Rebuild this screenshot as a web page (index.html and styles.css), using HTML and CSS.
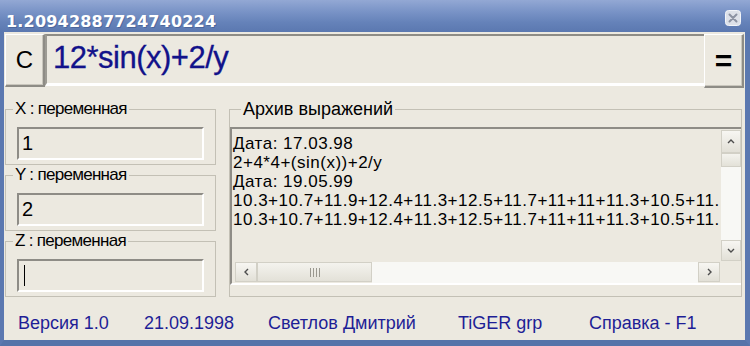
FILE: index.html
```html
<!DOCTYPE html>
<html lang="ru">
<head>
    <meta charset="UTF-8">
    <title>1.20942887724740224</title>
    <link rel="stylesheet" href="styles.css">
</head>
<body>
    <div class="window">
        <div class="titlebar">
            <span class="title">1.20942887724740224</span>
            <span class="close">
                <svg width="16" height="16" viewBox="0 0 16 16">
                    <rect x="0.5" y="0.5" width="15" height="15" rx="3" fill="#dde1e9" stroke="#f3f5f9"/>
                    <path d="M4.5 4.5 L11.5 11.5 M11.5 4.5 L4.5 11.5" stroke="#8c93a3" stroke-width="2" stroke-linecap="round"/>
                </svg>
            </span>
        </div>
        <div class="frame">
            <div class="client">
                <div class="expr-row">
                    <button class="btn btn-clear">C</button>
                    <div class="expr">12*sin(x)+2/y</div>
                    <button class="btn btn-eq">=</button>
                </div>

                <div class="main">
                    <div class="vars">
                        <fieldset class="group var">
                            <legend>X : переменная</legend>
                            <div class="field">1</div>
                        </fieldset>
                        <fieldset class="group var">
                            <legend>Y : переменная</legend>
                            <div class="field">2</div>
                        </fieldset>
                        <fieldset class="group var">
                            <legend>Z : переменная</legend>
                            <div class="field"><span class="caret"></span></div>
                        </fieldset>
                    </div>

                    <fieldset class="group archive">
                        <legend>Архив выражений</legend>
                        <div class="list">
                            <div class="lines">
                                <div>Дата: 17.03.98</div>
                                <div>2+4*4+(sin(x))+2/y</div>
                                <div>Дата: 19.05.99</div>
                                <div>10.3+10.7+11.9+12.4+11.3+12.5+11.7+11+11+11.3+10.5+11.</div>
                                <div>10.3+10.7+11.9+12.4+11.3+12.5+11.7+11+11+11.3+10.5+11.</div>
                            </div>
                            <div class="vscroll">
                                <div class="sb-btn sb-up">
                                    <svg width="8" height="5" viewBox="0 0 8 5"><path d="M1 4 L4 1 L7 4" fill="none" stroke="#4d4d4d" stroke-width="1.4"/></svg>
                                </div>
                                <div class="sb-thumb sb-thumb-v"></div>
                                <div class="sb-track"></div>
                                <div class="sb-btn sb-down">
                                    <svg width="8" height="5" viewBox="0 0 8 5"><path d="M1 1 L4 4 L7 1" fill="none" stroke="#4d4d4d" stroke-width="1.4"/></svg>
                                </div>
                            </div>
                            <div class="hscroll">
                                <div class="sb-btn sb-left">
                                    <svg width="5" height="8" viewBox="0 0 5 8"><path d="M4 1 L1 4 L4 7" fill="none" stroke="#4d4d4d" stroke-width="1.4"/></svg>
                                </div>
                                <div class="sb-thumb sb-thumb-h">
                                    <span class="grip"></span><span class="grip"></span><span class="grip"></span><span class="grip"></span>
                                </div>
                                <div class="sb-track"></div>
                                <div class="sb-btn sb-right">
                                    <svg width="5" height="8" viewBox="0 0 5 8"><path d="M1 1 L4 4 L1 7" fill="none" stroke="#4d4d4d" stroke-width="1.4"/></svg>
                                </div>
                            </div>
                            <div class="sb-corner"></div>
                        </div>
                    </fieldset>
                </div>

                <div class="status">
                    <span>Версия 1.0</span>
                    <span>21.09.1998</span>
                    <span>Светлов Дмитрий</span>
                    <span>TiGER grp</span>
                    <span>Справка - F1</span>
                </div>
            </div>
        </div>
    </div>
</body>
</html>
```

FILE: styles.css
```css
body {
    margin: 0;
    font-family: "Liberation Sans", Arial, sans-serif;
    background: #ece9e0;
}
.window {
    width: 750px;
    height: 346px;
    display: flex;
    flex-direction: column;
    overflow: hidden;
}
.titlebar {
    height: 32px;
    flex: none;
    display: flex;
    justify-content: space-between;
    align-items: flex-start;
    padding: 0 9px 0 6px;
    box-sizing: border-box;
    background: linear-gradient(#93a8d4 0, #7a94c7 35%, #6582b9 70%, #5b78b0 100%);
}
.title {
    margin-top: 12px;
    font-family: "DejaVu Sans", sans-serif;
    font-weight: bold;
    font-size: 16px;
    line-height: 19px;
    letter-spacing: 0.2px;
    color: #fff;
    text-shadow: 1px 1px 0 rgba(40,60,110,0.35);
}
.close {
    margin-top: 10px;
    width: 16px;
    height: 16px;
}
.close svg {
    display: block;
}
.frame {
    flex: 1;
    display: flex;
    border-left: 4px solid #5b78b0;
    border-right: 5px solid #5b78b0;
    border-bottom: 6px solid #5573a9;
}
.client {
    flex: 1;
    display: flex;
    flex-direction: column;
    padding: 2px 1px 0 1px;
    background: #ece9e0;
}

/* expression row */
.expr-row {
    display: flex;
    align-items: flex-start;
}
.btn {
    flex: none;
    width: 40px;
    padding: 0;
    margin: 0;
    background: #ece9e0;
    font-family: "Liberation Sans", Arial, sans-serif;
    color: #000;
    border-top: 1px solid #fff;
    border-left: 1px solid #fff;
    border-right: 2px solid #8e8c86;
    border-bottom: 2px solid #8e8c86;
    box-shadow: inset -1px -1px 0 #c9c6bd;
}
.btn-clear {
    height: 53px;
    font-size: 24px;
}
.btn-eq {
    height: 54px;
    font-size: 30px;
    font-weight: bold;
}
.expr {
    flex: 1;
    height: 52px;
    box-sizing: border-box;
    display: flex;
    align-items: center;
    padding: 0 0 3px 6px;
    border-top: 2px solid #8e8c86;
    border-left: 2px solid #9d9b94;
    border-bottom: 3px solid #fff;
    font-size: 31px;
    letter-spacing: -0.5px;
    color: #12128a;
    -webkit-text-stroke: 0.3px #12128a;
}

/* groups */
.main {
    margin-top: 12px;
    display: grid;
    grid-template-columns: 211px 513px;
    column-gap: 13px;
}
.group {
    margin: 0;
    border: 1px solid #c3c0b5;
    min-width: 0;
}
.group legend {
    font-size: 18px;
    line-height: 18px;
    padding: 0 2px;
    color: #000;
}
.vars {
    display: flex;
    flex-direction: column;
    gap: 1px;
}
.var {
    padding: 0 7px 4px 7px;
}
.var legend {
    font-size: 17px;
    letter-spacing: -0.7px;
}
.field {
    margin: 9px 4px 0 4px;
    height: 33px;
    box-sizing: border-box;
    display: flex;
    align-items: center;
    padding-left: 3px;
    border-top: 2px solid #8e8c86;
    border-left: 2px solid #8e8c86;
    border-right: 2px solid #fff;
    border-bottom: 2px solid #fff;
    font-size: 20px;
    color: #000;
}
.caret {
    width: 0;
    height: 21px;
    border-left: 1px solid #000;
    margin-left: 2px;
}

/* archive list */
.archive {
    padding: 0 0 11px 0;
}
.archive legend {
    margin-left: 11px;
}
.list {
    margin-top: 9px;
    height: 158px;
    box-sizing: border-box;
    display: grid;
    grid-template-columns: 1fr 20px;
    grid-template-rows: 132px 22px;
    border-top: 2px solid #8e8c86;
    border-left: 2px solid #8e8c86;
    border-bottom: 2px solid #fff;
}
.lines {
    overflow: hidden;
    white-space: nowrap;
    padding: 5px 0 0 1px;
    font-size: 17px;
    line-height: 19px;
    letter-spacing: 0.5px;
    color: #000;
}
.vscroll {
    display: flex;
    flex-direction: column;
    padding-top: 1px;
}
.hscroll {
    display: flex;
    padding: 1px 0 0 3px;
}
.sb-btn {
    flex: none;
    display: flex;
    align-items: center;
    justify-content: center;
    box-sizing: border-box;
    border: 1px solid #d2d0c6;
    background: linear-gradient(#f7f6f2, #e2e0d7);
}
.sb-btn svg {
    display: block;
}
.sb-up {
    height: 23px;
}
.sb-down {
    height: 21px;
}
.sb-left,
.sb-right {
    width: 22px;
    height: 20px;
}
.sb-right {
    margin-right: 1px;
}
.sb-thumb {
    flex: none;
    box-sizing: border-box;
    border: 1px solid #d2d0c6;
    background: linear-gradient(#f4f3ee, #e3e1d8);
}
.sb-thumb-v {
    height: 14px;
}
.sb-thumb-h {
    width: 115px;
    height: 20px;
    display: flex;
    align-items: center;
    justify-content: center;
    gap: 2px;
}
.grip {
    width: 1px;
    height: 9px;
    background: #9a988f;
}
.sb-track {
    flex: 1;
    background: #f8f8f5;
}
.sb-corner {
    background: #ece9e0;
}

/* status line */
.status {
    margin-top: 16px;
    padding-left: 13px;
    display: grid;
    grid-template-columns: 126px 124px 190px 131px auto;
    font-size: 18px;
    line-height: 20px;
    color: #1e1e96;
}
```
